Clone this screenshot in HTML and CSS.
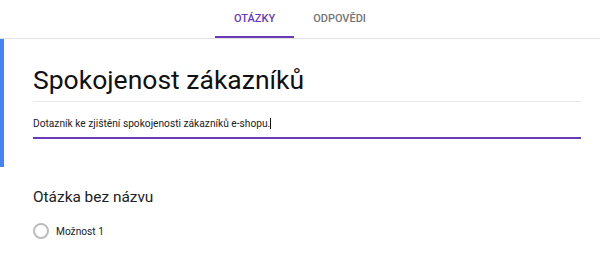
FILE: index.html
```html
<!DOCTYPE html>
<html lang="cs">
<head>
    <meta charset="UTF-8">
    <meta name="viewport" content="width=device-width, initial-scale=1.0">
    <title>Spokojenost zákazníků</title>
    <link rel="stylesheet" href="styles.css">
</head>
<body>
    <header class="tabs">
        <div class="tab active">OTÁZKY</div>
        <div class="tab">ODPOVĚDI</div>
    </header>

    <div class="form-card">
        <h1 class="form-title">Spokojenost zákazníků</h1>
        <div class="form-description">Dotazník ke zjištění spokojenosti zákazníků e-shopu.<span class="caret"></span></div>
    </div>

    <div class="question">
        <h2 class="question-title">Otázka bez názvu</h2>
        <div class="option">
            <span class="radio"></span>
            <span class="option-label">Možnost 1</span>
        </div>
    </div>
</body>
</html>
```

FILE: styles.css
```css
body {
    font-family: Roboto, 'Noto Sans', sans-serif;
    margin: 0;
    padding: 0;
    background-color: #fff;
    color: #202124;
}
.tabs {
    display: flex;
    justify-content: center;
    height: 38px;
    border-bottom: 1px solid #e0e0e0;
}
.tab {
    font-size: 11px;
    font-weight: 500;
    color: #757575;
    padding: 0 19px;
    line-height: 38px;
    box-sizing: border-box;
    border-bottom: 2px solid transparent;
    height: 38px;
}
.tab.active {
    color: #673ab7;
    border-bottom-color: #673ab7;
}
.form-card {
    border-left: 4px solid #4285f4;
    padding: 23px 19px 28px 29px;
}
.form-title {
    font-size: 26.5px;
    font-weight: 400;
    line-height: 36px;
    margin: 0;
    padding-bottom: 3px;
    border-bottom: 1px solid #e8e8e8;
    color: #111;
}
.form-description {
    font-size: 10.2px;
    line-height: 16px;
    margin-top: 14px;
    padding-bottom: 5px;
    border-bottom: 2px solid #673ab7;
}
.caret {
    display: inline-block;
    width: 1px;
    height: 11px;
    background: #111;
    vertical-align: -2px;
}
.question {
    padding: 19px 20px 0 33px;
}
.question-title {
    font-size: 15.4px;
    font-weight: 400;
    margin: 0;
    line-height: 22px;
}
.option {
    display: flex;
    align-items: center;
    gap: 7px;
    margin-top: 15px;
}
.radio {
    width: 12px;
    height: 12px;
    border: 2px solid #bdbdbd;
    border-radius: 50%;
}
.option-label {
    font-size: 10.2px;
}
```
